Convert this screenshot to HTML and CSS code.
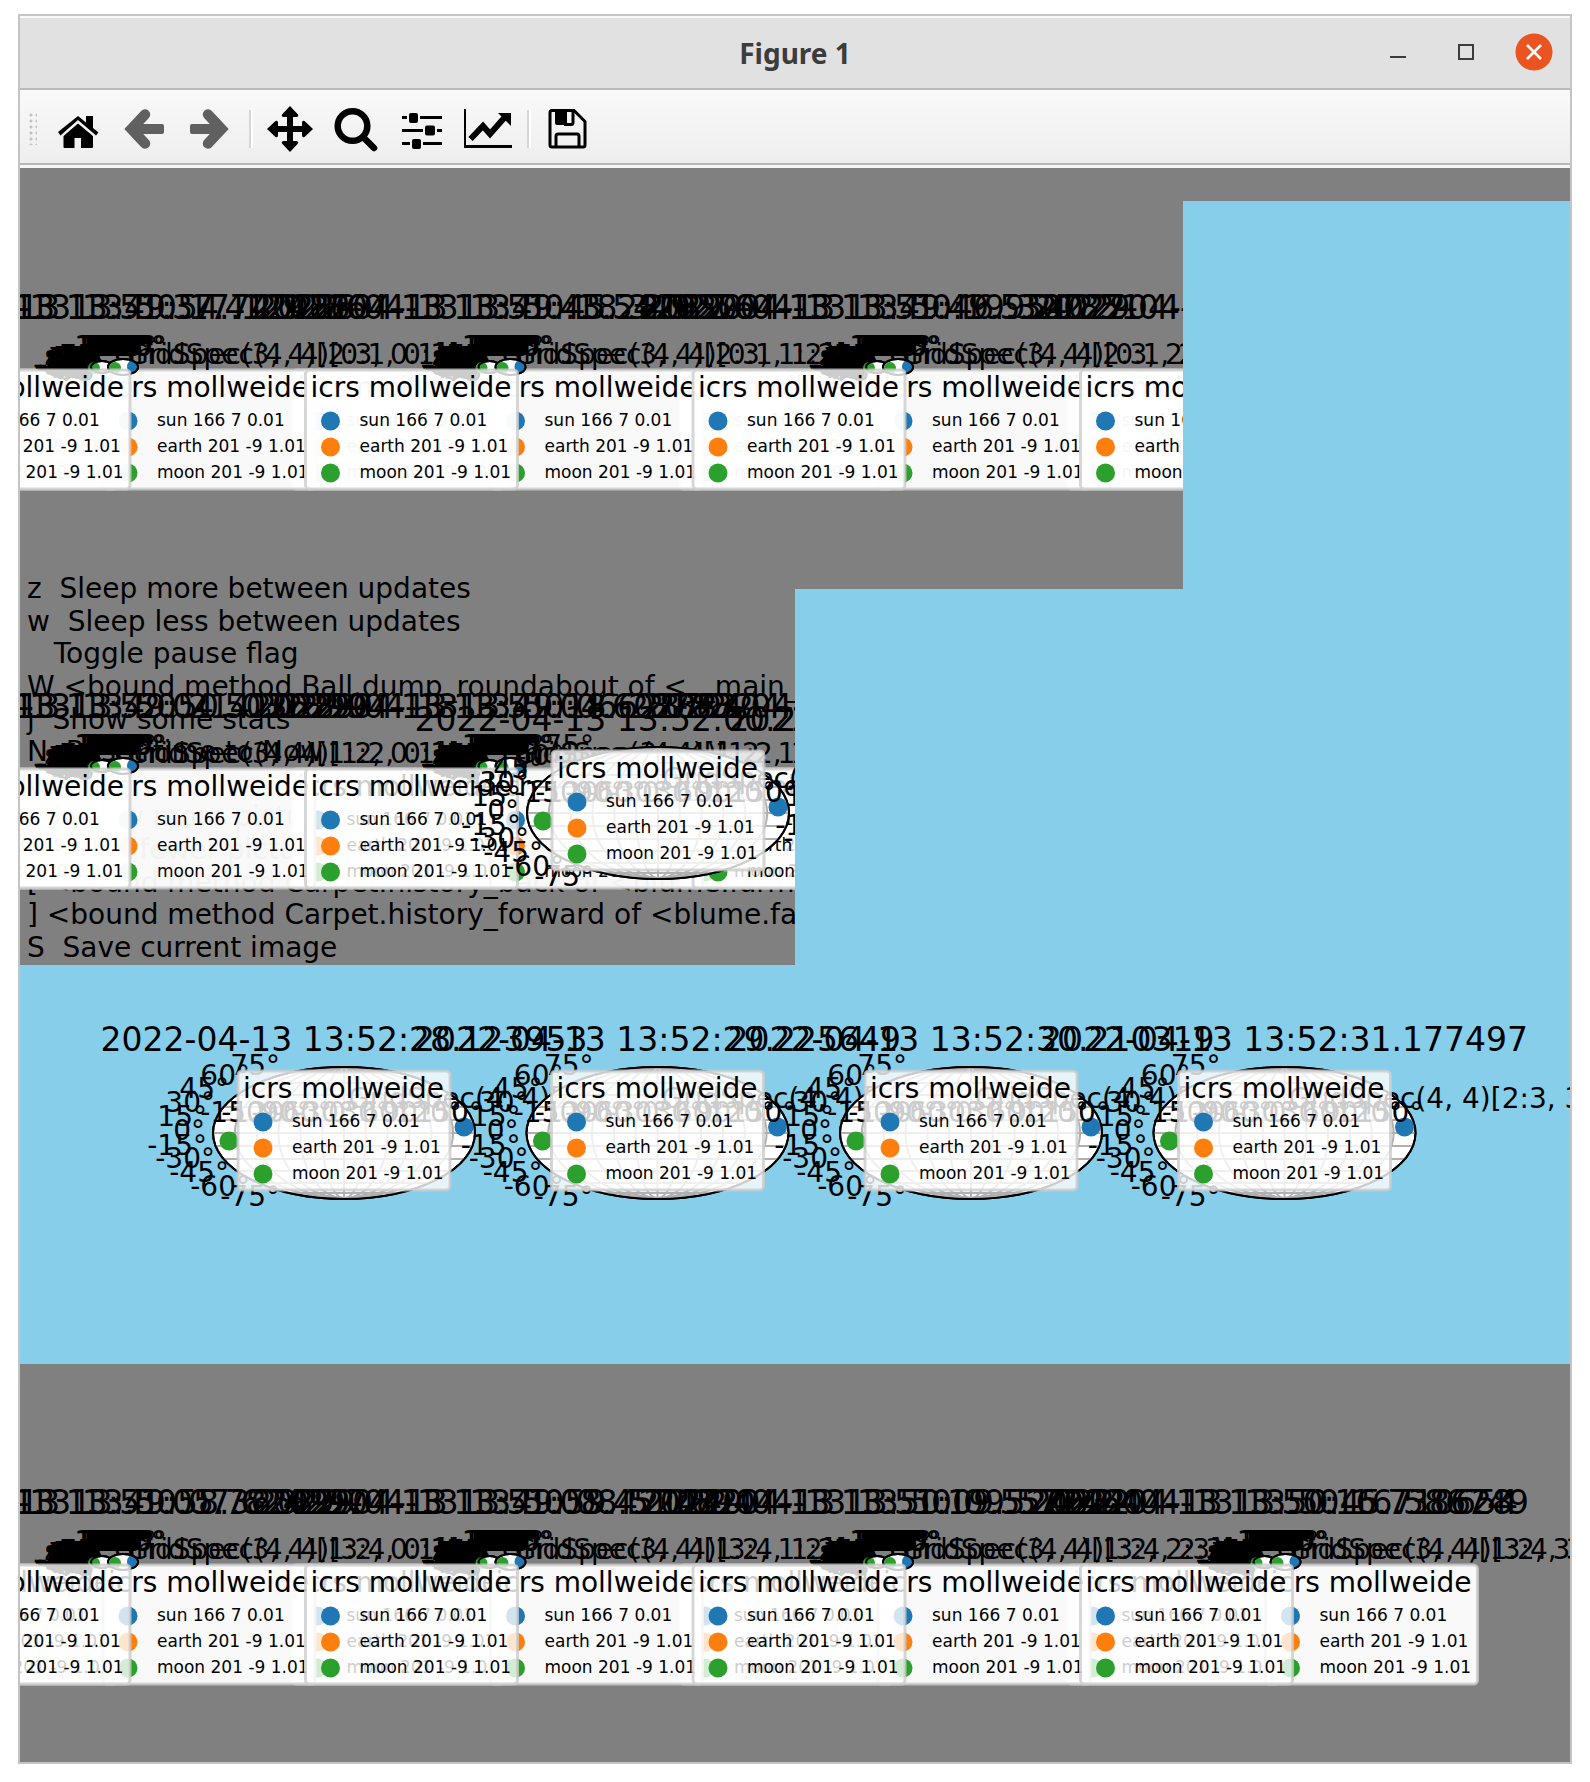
FILE: index.html
```html
<!DOCTYPE html>
<html lang="en">
<head>
<meta charset="utf-8">
<title>Figure 1</title>
<link rel="stylesheet" href="styles.css">
</head>
<body>
<main class="window">
  <header class="titlebar">
    <h1 class="title">Figure 1</h1>
    <div class="window-controls">
      <button class="control" type="button" aria-label="Minimize"><svg class="glyph" viewBox="0 0 16 16"><path d="M0 13h16" stroke="#3c3c3c" stroke-width="2"/></svg></button>
      <button class="control" type="button" aria-label="Maximize"><svg class="glyph" viewBox="0 0 16 16"><path d="M1 1h14v14H1z" fill="none" stroke="#3c3c3c" stroke-width="2"/></svg></button>
      <button class="control close" type="button" aria-label="Close"><svg class="glyph" viewBox="0 0 16 16"><path d="M1 1l14 14M15 1L1 15" stroke="#fff" stroke-width="2.6"/></svg></button>
    </div>
  </header>
  <nav class="toolbar" aria-label="Figure tools">
    <span class="grip"></span>
    <button class="tool" type="button" aria-label="Home"><svg class="icon" viewBox="0 0 48 48"><path d="M4 27L24 11l8 6.500V11h7v12l5.500 4.500-2.500 3L24 15 6.500 30.500z"/><path d="M24 18.500L39 31v11q0 1-1 1H27V33h-6.500v10H10.500q-1 0-1-1V31z"/></svg></button>
    <button class="tool" type="button" aria-label="Back"><svg class="icon dim" viewBox="0 0 48 48"><path d="M25 9.500L11.500 24 25 38.500" fill="none" stroke-width="10.500" stroke-linecap="round" stroke-linejoin="miter"/><path d="M12 19h30q2 0 2 2v6q0 2-2 2H12z" stroke="none"/></svg></button>
    <button class="tool" type="button" aria-label="Forward"><svg class="icon dim" viewBox="0 0 48 48"><path d="M22 9.500L35.500 24 22 38.500" fill="none" stroke-width="10.500" stroke-linecap="round" stroke-linejoin="miter"/><path d="M35 19H6q-2 0-2 2v6q0 2 2 2h29z" stroke="none"/></svg></button>
    <span class="separator"></span>
    <button class="tool" type="button" aria-label="Pan"><svg class="icon" viewBox="0 0 48 48"><path d="M24 1l8 8.500q1 2.500-2 2.500h-3v9h9v-3q0-3 2.500-2L47 24l-8.500 8q-2.500 1-2.500-2v-3h-9v9h3q3 0 2 2.500L24 47l-8-8.500q-1-2.500 2-2.500h3v-9h-9v3q0 3-2.500 2L1 24l8.500-8q2.500-1 2.500 2v3h9v-9h-3q-3 0-2-2.500z"/></svg></button>
    <button class="tool" type="button" aria-label="Zoom"><svg class="icon" viewBox="0 0 48 48"><circle cx="20.500" cy="21" r="14.800" fill="none" stroke="#000" stroke-width="6.500"/><path d="M31 32l11 11" stroke="#000" stroke-width="6.500" stroke-linecap="round"/></svg></button>
    <button class="tool" type="button" aria-label="Configure subplots"><svg class="icon" viewBox="0 0 48 48"><path d="M4 12.500h5M22 12.500h22M4 25.500h21M39 25.500h5M4 38.500h8M25 38.500h19" stroke="#000" stroke-width="3"/><rect x="11" y="8" width="9" height="10" rx="2"/><rect x="27" y="20.500" width="10" height="10" rx="2"/><rect x="14" y="34" width="9" height="10" rx="2"/></svg></button>
    <button class="tool" type="button" aria-label="Edit axis"><svg class="icon" viewBox="0 0 48 48"><path d="M1 4v39" stroke="#000" stroke-width="2"/><path d="M0 41.500h48" stroke="#000" stroke-width="3"/><path d="M6.500 34L19 21l7 8 15-17" fill="none" stroke="#000" stroke-width="6"/><path d="M34 8h13v13z"/></svg></button>
    <span class="separator"></span>
    <button class="tool" type="button" aria-label="Save"><svg class="icon" viewBox="0 0 48 48"><path d="M8 5.500h22l11 11V40q0 2-2 2H8q-2 0-2-2V7.500q0-2 2-2z" fill="none" stroke="#000" stroke-width="3"/><path d="M11 5h12v15H13q-2 0-2-2z"/><path d="M20 19.500h7q2 0 2-2V6M12 42V31q0-2 2-2h19q2 0 2 2v11" fill="none" stroke="#000" stroke-width="3"/></svg></button>
  </nav>
  <svg class="figure" id="figure" viewBox="0 0 1550 1594" role="img" aria-label="Sky plots of the sun, earth and moon">
    <defs>
      <clipPath id="upper"><path d="M0 0h1163v421H0z"/></clipPath>
      <clipPath id="middle"><path d="M0 400h775v397H0z"/></clipPath>
      <clipPath id="ball"><ellipse rx="15" ry="8"/></clipPath>
    </defs>
    <rect class="sky" width="1550" height="1594"/>
    <path class="ground" d="M0 0h1550v33H1163v388H775v376H0zM0 1196h1550v398H0z"/>
  </svg>
</main>
<script src="figure.js"></script>
</body>
</html>
```

FILE: styles.css
```css
* {
  box-sizing: border-box;
}

body {
  margin: 0;
  padding: 14px 18px 18px;
  background: #fff;
  font-family: "DejaVu Sans", sans-serif;
}

.window {
  border: 2px solid #c4c4c4;
}

.titlebar {
  display: grid;
  grid-template-columns: 1fr auto 1fr;
  align-items: center;
  height: 74px;
  padding-right: 17px;
  background: #e1e1e1;
  border-top: 2px solid #f8f8f8;
  border-bottom: 2px solid #bbb;
}

.title {
  grid-column: 2;
  margin: 0;
  padding-left: 17px;
  color: #3c3c3c;
  font: bold 28px/36px "Noto Sans", sans-serif;
}

.window-controls {
  display: flex;
  justify-content: flex-end;
  gap: 30px;
  padding-bottom: 2px;
}

.control {
  display: grid;
  place-items: center;
  width: 38px;
  height: 38px;
  padding: 0;
  border: 0;
  border-radius: 50%;
  background: none;
}

.close {
  background: radial-gradient(circle, #e95420 18px, transparent 19px);
}

.glyph {
  width: 16px;
  height: 16px;
}

.toolbar {
  display: flex;
  align-items: center;
  height: 78px;
  padding: 4px 9px 5px;
  background: linear-gradient(#f9f9f9, #eee 73px, #b7b7b7 73px, #b7b7b7 75px, #f6f6f6 75px);
}

.grip {
  width: 8px;
  height: 32px;
  margin-right: 8px;
  background: radial-gradient(circle at 2px 2px, #c2c2c2 1px, transparent 2px) 0 0 / 6px 6px;
}

.tool {
  display: grid;
  place-items: center;
  width: 66px;
  height: 66px;
  padding: 0;
  border: 0;
  background: none;
}

.icon {
  width: 48px;
  height: 48px;
}

.dim {
  fill: #606060;
  stroke: #606060;
}

.separator {
  width: 4px;
  height: 38px;
  margin: 0 4px 0 6px;
  background: linear-gradient(90deg, #d6d6d6 2px, #fff 2px);
}

.figure {
  display: block;
  width: 100%;
  height: auto;
  font-family: "DejaVu Sans", sans-serif;
}

.sky {
  fill: #87ceeb;
}

.ground {
  fill: #808080;
}

.heading {
  font-size: 33px;
  text-anchor: middle;
}

.note {
  font-size: 28px;
  white-space: pre;
}

.latitude {
  font-size: 28px;
  text-anchor: end;
}

.longitude {
  font-size: 28px;
  text-anchor: middle;
}

.entry {
  font-size: 17px;
}

.globe {
  fill: #fff;
  stroke: #000;
  stroke-width: 2px;
}

.outline {
  fill: none;
  stroke: #000;
  stroke-width: 2px;
}

.grid {
  fill: none;
  stroke: #b0b0b0;
  stroke-width: 2px;
}

.frame {
  fill: #fff;
  fill-opacity: 0.8;
  stroke: #ccc;
  stroke-opacity: 0.8;
  stroke-width: 3px;
}

.frame.solid {
  fill-opacity: 0.95;
}

.backing {
  fill: #fff;
  fill-opacity: 0.8;
}

.sun {
  fill: #1f77b4;
}

.earth {
  fill: #ff7f0e;
}

.moon {
  fill: #2ca02c;
}
```

FILE: figure.js
```js
const figure = document.getElementById("figure");

function add(parent, name, attributes, text) {
  const node = document.createElementNS("http://www.w3.org/2000/svg", name);
  for (const key in attributes) node.setAttribute(key, attributes[key]);
  if (text) node.textContent = text;
  parent.appendChild(node);
  return node;
}

function group(parent, x, y) {
  return add(parent, "g", { transform: `translate(${x} ${y})` });
}

// Legend box; x and y are its outer top left corner.
function legend(parent, x, y, solid) {
  const g = group(parent, x, y);
  add(g, "rect", { class: solid ? "frame solid" : "frame", x: 1, y: 1, width: 212, height: 119, rx: 4 });
  add(g, "text", { class: "note", x: 6, y: 28 }, "icrs mollweide");
  const rows = [["sun", "sun 166 7 0.01"], ["earth", "earth 201 -9 1.01"], ["moon", "moon 201 -9 1.01"]];
  rows.forEach(([name, label], i) => {
    add(g, "circle", { class: name, cx: 26, cy: 52 + i * 26, r: 9.5 });
    add(g, "text", { class: "entry", x: 55, y: 57 + i * 26 }, label);
  });
}

// Degree labels round an ellipse of the given half width and half height.
function degrees(g, rx, ry) {
  const ends = { 75: [-64, -58], 60: [-94, -48], 45: [-115, -35], 30: [-129, -21], 15: [-137, -7], 0: [-139, 7],
    "-15": [-137, 22], "-30": [-129, 35], "-45": [-115, 49], "-60": [-94, 63], "-75": [-64, 73] };
  for (const degree of [-75, -60, -45, -30, -15, 0, 15, 30, 45, 60, 75]) {
    const [x, y] = ends[degree];
    const left = rx === 131 ? x : (x + 8) * rx / 131 - 8;
    const base = ry === 66 ? y : (y - 7) * ry / 66 + 6;
    add(g, "text", { class: "latitude", x: Math.round(left), y: Math.round(base) }, degree + "°");
  }
  for (let degree = -150; degree <= 150; degree += 30) {
    add(g, "text", { class: "longitude", x: Math.round(degree / 150 * rx * 0.8), y: -11 }, degree + "°");
  }
}

function skyPlot(parent, x, y, time, cell) {
  const g = group(parent, x, y);
  add(g, "ellipse", { class: "globe", rx: 131, ry: 66 });
  for (let k = 1; k < 6; k++) add(g, "ellipse", { class: "grid", rx: 131 * k / 6, ry: 65 });
  for (const line of [-60, -50, -38, -26, -13, 0, 13, 26, 38, 50, 60]) {
    const half = 131 * Math.sqrt(1 - (line / 66) ** 2);
    add(g, "path", { class: "grid", d: `M${-half} ${line}H${half}` });
  }
  add(g, "path", { class: "grid", d: "M0 -65V65" });
  add(g, "ellipse", { class: "outline", rx: 131, ry: 66 });
  add(g, "circle", { class: "moon", cx: -115, cy: 8, r: 9.5 });
  add(g, "circle", { class: "sun", cx: 120, cy: -6, r: 9.5 });
  degrees(g, 131, 66);
  add(g, "text", { class: "heading", x: 0, y: -82 }, time);
  add(g, "text", { class: "note", x: 4, y: -25 }, cell);
  legend(g, -107, -63);
}

function smallPlot(parent, x, y, times, cells) {
  const g = group(parent, x, y);
  const shifts = [0, -11, -16];
  times.forEach((time, i) => add(g, "text", { class: "heading", x: shifts[i], y: -48 }, time));
  cells.forEach((cell, i) => add(g, "text", { class: "note", x: 4 - 13 * i, y: -3 }, cell));
  for (const [shift, rx, ry] of [[-14, 8, 5], [-8, 10, 6], [0, 13, 8]]) {
    degrees(group(g, shift, 0), rx, ry);
  }
  for (const [shift, rx, ry] of [[-21, 11, 6], [0, 15, 8]]) {
    const ball = group(g, shift, 0);
    add(ball, "ellipse", { class: "globe", rx, ry });
    const spots = add(ball, "g", { "clip-path": "url(#ball)" });
    add(spots, "circle", { class: "moon", cx: -8, cy: 1, r: 6 });
    if (shift === 0) add(spots, "circle", { class: "sun", cx: 13, cy: 0, r: 9 });
    add(ball, "ellipse", { class: "outline", rx, ry });
  }
}

// A row of small plots; hidden(k) tells whether the legends behind the front one in tile k are fully covered.
function row(parent, y, plots, hidden, fronts) {
  const pitch = 1550 / 4;
  const center = (k) => 103 + pitch * k;
  for (let k = 0; k < fronts; k++) legend(parent, center(k) - 219, y + 2, true);
  for (let k = 0; k < plots.length; k++) legend(parent, center(k) - 21, y + 2, true);
  for (let k = 0; k < fronts; k++) {
    if (hidden(k)) add(parent, "rect", { class: "backing", x: center(k) - 206, y: y + 3, width: 213, height: 118 });
  }
  plots.forEach(([times, cells], k) => smallPlot(parent, center(k), y, times, cells));
  for (let k = 0; k < fronts; k++) legend(parent, center(k) - 206, y + 2);
}

const upper = add(figure, "g", { "clip-path": "url(#upper)" });
const middle = add(figure, "g", { "clip-path": "url(#middle)" });

const help = [
  "z  Sleep more between updates",
  "w  Sleep less between updates",
  "   Toggle pause flag",
  "W <bound method Ball.dump_roundabout of <__main__",
  "j  Show some stats",
  "N  Reset time to Now",
  "",
  "+  Show more pictures",
  "-  Show fewer pictures",
  "[ <bound method Carpet.history_back of <blume.farm",
  "] <bound method Carpet.history_forward of <blume.farm",
  "S  Save current image",
];
help.forEach((line, i) => {
  if (line) add(middle, "text", { class: "note", x: 7, y: Math.round(430 + i * 359 / 11) }, line);
});

row(upper, 199, [
  [["2022-04-13 13:50:17.129286", "2022-04-13 13:49:54.740286", "2022-04-13 13:51:37.412486"], ["GridSpec(4, 4)[0:1, 0:1]", "GridSpec(3, 4)[2:3, 0:1]"]],
  [["2022-04-13 13:50:18.349256", "2022-04-13 13:49:45.281890", "2022-04-13 13:51:43.542850"], ["GridSpec(4, 4)[0:1, 1:2]", "GridSpec(3, 4)[2:3, 1:2]"]],
  [["2022-04-13 13:50:19.321851", "2022-04-13 13:49:46.954029", "2022-04-13 13:51:49.530227"], ["GridSpec(4, 4)[0:1, 2:3]", "GridSpec(3, 4)[2:3, 2:3]"]],
  [["2022-04-13 13:50:20.186254", "2022-04-13 13:49:47.125480"], ["GridSpec(4, 4)[0:1, 3:4]"]],
], () => true, 4);

row(middle, 598, [
  [["2022-04-13 13:50:21.032899", "2022-04-13 13:49:50.410289", "2022-04-13 13:52:04.503629"], ["GridSpec(4, 4)[1:2, 0:1]", "GridSpec(3, 4)[1:2, 0:1]"]],
  [["2022-04-13 13:50:06.287832", "2022-04-13 13:49:18.628794", "2022-04-13 13:51:04.602883"], ["GridSpec(4, 4)[1:2, 1:2]", "GridSpec(3, 4)[1:2, 1:2]"]],
  [["2022-04-13 13:50:07.238291", "2022-04-13 13:49:19.562841"], ["GridSpec(4, 4)[1:2, 2:3]"]],
], (k) => k === 0, 3);

skyPlot(middle, 638, 645, "2022-04-13 13:52:00.204518", "GridSpec(4, 4)[1:2, 1:2]");
skyPlot(middle, 952, 645, "2022-04-13 13:52:01.214518", "GridSpec(4, 4)[1:2, 2:3]");

const times = ["28.123953", "29.225649", "30.210319", "31.177497"];
times.forEach((seconds, k) => {
  skyPlot(figure, 324 + k * 627 / 2, 965, "2022-04-13 13:52:" + seconds, `GridSpec(4, 4)[2:3, ${k}:${k + 1}]`);
});

row(figure, 1394, [
  [["2022-04-13 13:50:07.624297", "2022-04-13 13:49:58.365899", "2022-04-13 13:51:05.782499"], ["GridSpec(4, 4)[3:4, 0:1]", "GridSpec(3, 4)[1:2, 0:1]"]],
  [["2022-04-13 13:50:08.512894", "2022-04-13 13:49:59.471240", "2022-04-13 13:51:08.452482"], ["GridSpec(4, 4)[3:4, 1:2]", "GridSpec(3, 4)[1:2, 1:2]"]],
  [["2022-04-13 13:50:09.572464", "2022-04-13 13:50:09.524632", "2022-04-13 13:51:19.557244"], ["GridSpec(4, 4)[3:4, 2:3]", "GridSpec(3, 4)[1:2, 2:3]"]],
  [["2022-04-13 13:50:16.586749", "2022-04-13 13:50:45.710654", "2022-04-13 13:50:16.738628"], ["GridSpec(4, 4)[3:4, 3:4]", "GridSpec(3, 4)[1:2, 3:4]"]],
], () => false, 4);
```
